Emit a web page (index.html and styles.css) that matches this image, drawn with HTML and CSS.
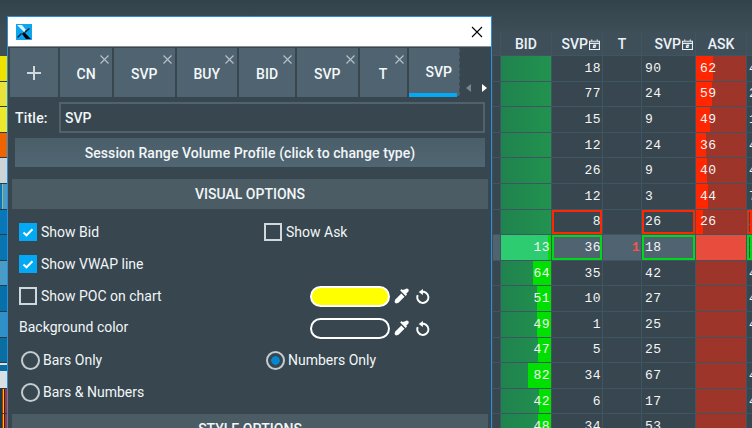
FILE: index.html
```html
<!DOCTYPE html>
<html lang="en">
<head>
<meta charset="utf-8">
<title>SVP settings</title>
<link rel="stylesheet" href="styles.css">
</head>
<body>
<div class="desktop">
  <div class="strip">
    <i class="s1"></i><i class="s2"></i><i class="s3"></i><i class="s4"></i><i class="s5"></i><i class="s6"></i><i class="s7"></i><i class="s8"></i><i class="s9"></i><i class="s10"></i><i class="s11"></i><i class="s12"></i><i class="s13"></i><i class="s14"></i><i class="s14"></i>
  </div>
  <div class="ladder">
    <div class="hd"></div><div class="hd">BID</div><div class="hd hd-end">SVP<svg class="cal" viewBox="0 0 10 10"><path d="M.5 2h9v7.5h-9zM.5 4h9M2.500 .5V2M7.500 .5V2M4 5.500h2v1H4v1.200h2" fill="none" stroke="#e4eef4"/></svg></div><div class="hd">T</div><div class="hd hd-end">SVP<svg class="cal" viewBox="0 0 10 10"><path d="M.5 2h9v7.5h-9zM.5 4h9M2.500 .5V2M7.500 .5V2M4 5.500h2v1H4v1.200h2" fill="none" stroke="#e4eef4"/></svg></div><div class="hd">ASK</div><div class="hd"></div>

    <div class="c"></div><div class="c bid"></div><div class="c r">18</div><div class="c"></div><div class="c l">90</div><div class="c ask"><b class="abar" style="width:17px"></b><span>62</span></div><div class="c l e">4</div>
    <div class="c"></div><div class="c bid"></div><div class="c r">77</div><div class="c"></div><div class="c l">24</div><div class="c ask"><b class="abar" style="width:16px"></b><span>59</span></div><div class="c l e">2</div>
    <div class="c"></div><div class="c bid"></div><div class="c r">15</div><div class="c"></div><div class="c l">9</div><div class="c ask"><b class="abar" style="width:14px"></b><span>49</span></div><div class="c l e">1</div>
    <div class="c"></div><div class="c bid"></div><div class="c r">12</div><div class="c"></div><div class="c l">24</div><div class="c ask"><b class="abar" style="width:10px"></b><span>36</span></div><div class="c l e">4</div>
    <div class="c"></div><div class="c bid"></div><div class="c r">26</div><div class="c"></div><div class="c l">9</div><div class="c ask"><b class="abar" style="width:11px"></b><span>40</span></div><div class="c l e">4</div>
    <div class="c"></div><div class="c bid"></div><div class="c r">12</div><div class="c"></div><div class="c l">3</div><div class="c ask"><b class="abar" style="width:12px"></b><span>44</span></div><div class="c l e">7</div>
    <div class="c"></div><div class="c bid"></div><div class="c r box-r">8</div><div class="c"></div><div class="c l box-r">26</div><div class="c ask"><b class="abar" style="width:7px"></b><span>26</span></div><div class="c l e box-r">2</div>
    <div class="c cur"></div><div class="c bid-cur r"><b class="gbar" style="width:3px"></b><span>13</span></div><div class="c r cur box-g">36</div><div class="c r cur t1">1</div><div class="c l cur box-g">18</div><div class="c ask-cur"></div><div class="c l e box-g">1</div>
    <div class="c"></div><div class="c bid r"><b class="gbar" style="width:18px"></b><span>64</span></div><div class="c r">35</div><div class="c"></div><div class="c l">42</div><div class="c ask"></div><div class="c l e">4</div>
    <div class="c"></div><div class="c bid r"><b class="gbar" style="width:14px"></b><span>51</span></div><div class="c r">10</div><div class="c"></div><div class="c l">27</div><div class="c ask"></div><div class="c l e">4</div>
    <div class="c"></div><div class="c bid r"><b class="gbar" style="width:14px"></b><span>49</span></div><div class="c r">1</div><div class="c"></div><div class="c l">25</div><div class="c ask"></div><div class="c l e">4</div>
    <div class="c"></div><div class="c bid r"><b class="gbar" style="width:13px"></b><span>47</span></div><div class="c r">5</div><div class="c"></div><div class="c l">25</div><div class="c ask"></div><div class="c l e"></div>
    <div class="c"></div><div class="c bid r"><b class="gbar" style="width:23px"></b><span>82</span></div><div class="c r">34</div><div class="c"></div><div class="c l">67</div><div class="c ask"></div><div class="c l e">4</div>
    <div class="c"></div><div class="c bid r"><b class="gbar" style="width:12px"></b><span>42</span></div><div class="c r">6</div><div class="c"></div><div class="c l">17</div><div class="c ask"></div><div class="c l e">4</div>
    <div class="c"></div><div class="c bid r"><b class="gbar" style="width:13px"></b><span>48</span></div><div class="c r">34</div><div class="c"></div><div class="c l">53</div><div class="c ask"></div><div class="c l e"></div>
  </div>

  <section class="dialog">
    <header class="titlebar">
      <svg class="logo" viewBox="0 0 16 16"><rect width="16" height="16" fill="#0ea5ee"/><path d="M1 1h5l4 5-2 2z" fill="#dff3fc"/><path d="M8 8l7 7h-5L6 10z" fill="#000"/><path d="M9 7l4-3 1 1-5 4zM6 10l-4 4-1-1 4-4z" fill="#0a2a3c"/></svg>
      <svg class="close" viewBox="0 0 12 12"><path d="M1 1l10 10M11 1L1 11" stroke="#000" stroke-width="1.100"/></svg>
    </header>
    <div class="tabbar">
      <div class="tabs">
        <div class="tab plus"><svg viewBox="0 0 14 14"><path d="M7 0v14M0 7h14" stroke="#cfd8dc" stroke-width="2"/></svg></div>
        <div class="tab tab-cn">CN<svg class="x" viewBox="0 0 9 9"><path d="M.5 .5l8 8M8.500 .5l-8 8" stroke="#b4c0c6" stroke-width="1.200"/></svg></div>
        <div class="tab">SVP<svg class="x" viewBox="0 0 9 9"><path d="M.5 .5l8 8M8.500 .5l-8 8" stroke="#b4c0c6" stroke-width="1.200"/></svg></div>
        <div class="tab">BUY<svg class="x" viewBox="0 0 9 9"><path d="M.5 .5l8 8M8.500 .5l-8 8" stroke="#b4c0c6" stroke-width="1.200"/></svg></div>
        <div class="tab">BID<svg class="x" viewBox="0 0 9 9"><path d="M.5 .5l8 8M8.500 .5l-8 8" stroke="#b4c0c6" stroke-width="1.200"/></svg></div>
        <div class="tab">SVP<svg class="x" viewBox="0 0 9 9"><path d="M.5 .5l8 8M8.500 .5l-8 8" stroke="#b4c0c6" stroke-width="1.200"/></svg></div>
        <div class="tab">T<svg class="x" viewBox="0 0 9 9"><path d="M.5 .5l8 8M8.500 .5l-8 8" stroke="#b4c0c6" stroke-width="1.200"/></svg></div>
        <div class="tab active">SVP</div>
      </div>
      <svg class="tear" viewBox="0 0 3 49" preserveAspectRatio="none"><path d="M0 0h2l1 3-1 3 1 3-1 3 1 3-1 3 1 3-1 3 1 3-1 3 1 3-1 3 1 3-1 3 1 4-1 2-2 0z" fill="#4f6470"/></svg>
      <div class="arrows">
        <svg viewBox="0 0 5 8"><path d="M5 0v8L0 4z" fill="#78868e"/></svg>
        <svg viewBox="0 0 5 8"><path d="M0 0v8l5-4z" fill="#fff"/></svg>
      </div>
    </div>
    <div class="title-row">
      <label class="title-label">Title:</label>
      <div class="title-input">SVP</div>
    </div>
    <div class="type-btn">Session Range Volume Profile (click to change type)</div>
    <div class="section">VISUAL OPTIONS</div>
    <div class="form">
      <div class="opt"><span class="cb on"><svg viewBox="0 0 18 18"><path d="M4.500 9.500l3 2.800 6-6" fill="none" stroke="#fff" stroke-width="2"/></svg></span>Show Bid</div>
      <div class="opt wide"><span class="cb"></span>Show Ask</div>
      <div class="opt full"><span class="cb on"><svg viewBox="0 0 18 18"><path d="M4.500 9.500l3 2.800 6-6" fill="none" stroke="#fff" stroke-width="2"/></svg></span>Show VWAP line</div>
      <div class="opt span2"><span class="cb"></span>Show POC on chart</div>
      <div class="swatch yellow"></div>
      <div class="tools">
        <svg class="drop" viewBox="0 0 16 16"><path d="M11.200 1.200c1-1 2.200-1 3-.2s.8 2-.2 3l-1.800 1.800.8.800-1.300 1.300-5.500-5.500 1.300-1.300.9.900z" fill="#fff"/><path d="M7.300 5.500l3.200 3.200-6 6-2.500.8-1.500-1.500.8-2.500z" fill="#fff"/></svg>
        <svg class="reset" viewBox="0 0 14 14"><path d="M5 2.800a5.200 5.200 0 1 1-3.400 3" fill="none" stroke="#fff" stroke-width="1.800"/><path d="M6.500 0v5.500L2.500 2.800z" fill="#fff"/></svg>
      </div>
      <div class="opt span2 plain">Background color</div>
      <div class="swatch"></div>
      <div class="tools">
        <svg class="drop" viewBox="0 0 16 16"><path d="M11.200 1.200c1-1 2.200-1 3-.2s.8 2-.2 3l-1.800 1.800.8.800-1.300 1.300-5.500-5.500 1.300-1.300.9.900z" fill="#fff"/><path d="M7.300 5.500l3.200 3.200-6 6-2.500.8-1.500-1.500.8-2.500z" fill="#fff"/></svg>
        <svg class="reset" viewBox="0 0 14 14"><path d="M5 2.800a5.200 5.200 0 1 1-3.400 3" fill="none" stroke="#fff" stroke-width="1.800"/><path d="M6.500 0v5.500L2.500 2.800z" fill="#fff"/></svg>
      </div>
      <div class="opt"><span class="radio"></span>Bars Only</div>
      <div class="opt wide"><span class="radio on"></span>Numbers Only</div>
      <div class="opt full"><span class="radio"></span>Bars &amp; Numbers</div>
    </div>
    <div class="section style-head">STYLE OPTIONS</div>
  </section>
</div>
</body>
</html>
```
FILE: styles.css
```css
* { box-sizing: border-box; }
html, body { margin: 0; padding: 0; }
body { width: 752px; height: 428px; overflow: hidden; background: #3a4a53; font-family: Roboto, "Liberation Sans", sans-serif; color: #f2f6f8; }

.desktop { position: relative; width: 752px; height: 428px; overflow: hidden; display: flex; padding-top: 32px; background: linear-gradient(#33434c, #3e4e57 32px); }

.strip { width: 7px; margin-top: 24px; flex: none; display: flex; flex-direction: column; }
.strip i { display: block; flex: none; height: 25.6px; border-bottom: 1px solid #2b3a44; }
.s1 { background: #f0e000; } .s2 { background: #e8e23c; } .s3 { background: #ece82c; } .s4 { background: #f06400; }
.s5 { background: #ccd4d8; } .s6 { background: linear-gradient(90deg, #0a78b8 0 2px, #9ab88a 2px 3px, #4e98c4 3px); } .s7 { background: #0a78b8; } .s8 { background: #0874b0; }
.s9 { background: #4a9cc8; } .s10 { background: #0870a8; } .s11 { background: #3090c8; } .s12 { background: #0a6ea0; }
.s13 { background: linear-gradient(#d8e0e4 0 2px, #0a6ea0 2px 8px, #d8e0e4 8px); } .s14 { background: linear-gradient(90deg, #1a3a48 0 2px, #d02818 2px 3px, #e8c800 3px 4px, #103040 4px 5px, #d02818 5px); }

.ladder { position: absolute; left: 493px; top: 32px; width: 259px; display: grid; grid-template-columns: 7px 50px 50px 38px 53px 50px 1fr; grid-template-rows: 23px; grid-auto-rows: 24.6px; column-gap: 1px; row-gap: 1px; background: #3f5562; }
.hd { background: #3f4f5a; display: flex; align-items: center; justify-content: center; font-size: 14px; font-weight: 500; color: #eaf2f8; }
.hd-end { justify-content: flex-end; padding-right: 2px; gap: 1px; }
.cal { width: 11px; height: 11px; margin-top: 2px; }
.c { background: #37464f; display: flex; align-items: center; font-family: "Liberation Mono", monospace; font-size: 13px; letter-spacing: .5px; color: #f5f5f5; overflow: hidden; position: relative; }
.r { justify-content: flex-end; padding-right: 1px; }
.l { padding-left: 3px; }
.e { padding-left: 2px; white-space: nowrap; }
.bid { background: linear-gradient(90deg, #1f834d, #22924f); }
.ask { background: #9e352a; padding-left: 4px; }
.abar { position: absolute; left: 0; top: 0; bottom: 0; background: #ff2600; }
.gbar { position: absolute; right: 0; top: 0; bottom: 0; background: #00e000; }
.c span { position: relative; }
.cur { background: #4f6470; }
.bid-cur { background: #2ecc71; }
.ask-cur { background: #e74c3c; }
.t1 { color: #f4544a; font-weight: 700; padding-right: 1px; }
.box-r { outline: 2px solid #ff2600; outline-offset: -2px; padding-right: 1px; }
.box-g { outline: 2px solid #00d818; outline-offset: -2px; }

.dialog { position: absolute; left: 7px; top: 16px; width: 485px; height: 440px; border: 1px solid #2a8fd8; background: #37464f; }
.titlebar { height: 30px; background: #fff; border-bottom: 1px solid #8a9094; display: flex; align-items: center; justify-content: space-between; padding: 0 8px; }
.logo { width: 16px; height: 16px; }
.close { width: 12px; height: 12px; }

.tabbar { display: flex; height: 50px; padding-top: 1px; padding-left: 2px; }
.tabs { display: flex; gap: 2px; width: 447px; overflow: hidden; flex: none; }
.tab { position: relative; flex: none; min-width: 47px; padding: 2px 17px 0; display: flex; align-items: center; justify-content: center; background: #4f6470; font-size: 14px; font-weight: 500; color: #f4f8fa; }
.tab-cn { padding: 2px 16.5px 0; }
.plus { width: 48px; padding: 0; }
.plus svg { width: 14px; height: 14px; }
.x { position: absolute; top: 7px; right: 3px; width: 9px; height: 9px; }
.active { border-bottom: 4px solid #03a9f4; }
.tear { width: 3px; height: 49px; flex: none; }
.arrows { display: flex; align-items: flex-end; gap: 11px; padding: 0 0 5px 6px; }
.arrows svg { width: 5px; height: 8px; }

.title-row { display: flex; align-items: center; height: 31px; margin-top: 5px; padding-left: 7px; }
.title-label { width: 44px; font-size: 14px; font-weight: 500; letter-spacing: .2px; }
.title-input { width: 426px; height: 31px; border: 2px solid #50626c; padding: 0 4px; display: flex; align-items: center; font-size: 14px; font-weight: 500; }

.type-btn { margin: 5px 0 0 7px; width: 470px; height: 29px; background: linear-gradient(#4a5e69, #506672); display: flex; align-items: center; justify-content: center; font-size: 14px; font-weight: 500; letter-spacing: .08px; }
.section { margin: 12px 0 0 4px; width: 476px; height: 30px; background: #4b5c65; display: flex; align-items: center; justify-content: center; font-size: 14px; font-weight: 500; }
.style-head { margin-top: 6px; }

.form { display: grid; grid-template-columns: 245px 46px 80px 1fr; grid-auto-rows: 32px; padding: 7px 0 0 11px; font-size: 14px; font-weight: 400; }
.opt { display: flex; align-items: center; gap: 4px; white-space: nowrap; }
.wide { grid-column: 2 / 5; }
.full { grid-column: 1 / 5; }
.span2 { grid-column: 1 / 3; }
.plain { padding-bottom: 2px; }
.cb { width: 18px; height: 18px; flex: none; border: 2px solid #cfd8dc; }
.cb.on { border: 0; background: #03a9f4; }
.cb svg { display: block; width: 18px; height: 18px; }
.radio { width: 19px; height: 19px; flex: none; margin-left: 2px; margin-right: -1px; border-radius: 50%; border: 2px solid #c3ccd0; }
.radio.on { background: radial-gradient(circle, #0288d1 0 4px, transparent 4.5px); }
.swatch { width: 80px; height: 21px; align-self: center; border: 2px solid #fff; border-radius: 11px; }
.yellow { background: #ffff00; }
.tools { display: flex; align-items: center; gap: 6px; padding-left: 4px; }
.drop { width: 16px; height: 16px; }
.reset { width: 15px; height: 15px; }
```
